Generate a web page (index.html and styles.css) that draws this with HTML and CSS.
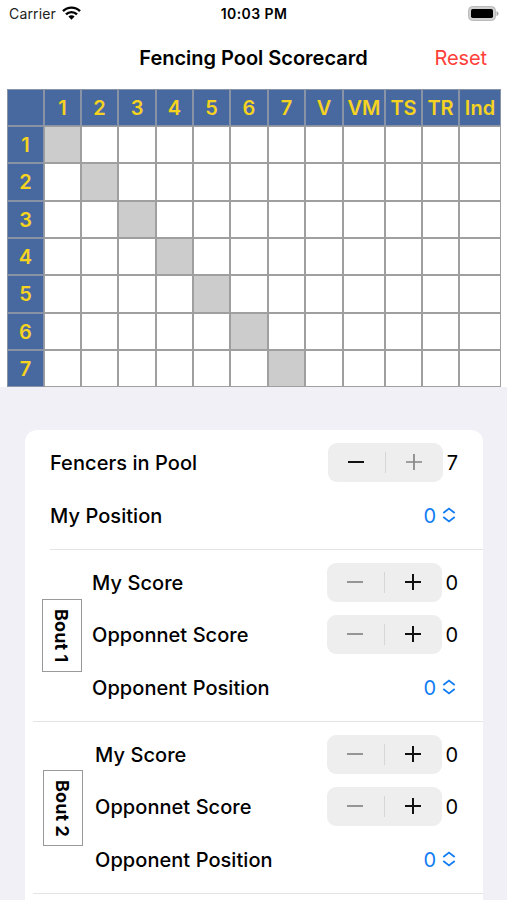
FILE: index.html
```html
<!DOCTYPE html>
<html lang="en">
<head>
<meta charset="utf-8">
<title>Fencing Pool Scorecard</title>
<link rel="stylesheet" href="styles.css">
</head>
<body>
<svg class="defs" width="0" height="0">
  <symbol id="minus" viewBox="0 0 18 18"><path d="M1 9H17"/></symbol>
  <symbol id="plus" viewBox="0 0 18 18"><path d="M1 9H17M9 1V17"/></symbol>
  <symbol id="updown" viewBox="0 0 14 16"><path d="M1.3 6L7 1.6L12.7 6M1.3 10L7 14.4L12.7 10"/></symbol>
</svg>
<header class="status">
  <div class="carrier"><span>Carrier</span>
    <svg class="wifi" width="19" height="14" viewBox="0 0 19 14"><path d="M1 5.2A11.8 11.8 0 0 1 18 5.2M4 8.4A7.7 7.7 0 0 1 15 8.4" fill="none" stroke="#000" stroke-width="2.4"/><path d="M6.4 10.6A4.4 4.4 0 0 1 12.6 10.6L9.5 13.8Z"/></svg>
  </div>
  <time class="clock">10:03 PM</time>
  <svg class="battery" width="31" height="15" viewBox="0 0 31 15"><rect x=".5" y=".5" width="27" height="14" rx="4" fill="#cfcfcf" stroke="#bbb"/><rect x="3" y="3" width="22" height="9" rx="1.8"/><path d="M28.5 5Q30.5 5.5 30.5 7.5T28.5 10Z" fill="#aaa"/></svg>
</header>
<nav class="navbar"><h1>Fencing Pool Scorecard</h1><button class="reset">Reset</button></nav>
<main>
  <section class="board"><div class="pool" id="pool"></div></section>
  <section class="card">
    <div class="settings">
      <div class="row"><span class="label">Fencers in Pool</span><div class="stepper"><svg><use href="#minus"/></svg><i></i><svg class="off"><use href="#plus"/></svg></div><span class="value narrow">7</span></div>
      <div class="row choice"><span class="label">My Position</span><span class="picker">0<svg><use href="#updown"/></svg></span></div>
    </div>
    <div class="bout first">
      <div class="tag"><span>Bout 1</span></div>
      <div class="rows">
        <div class="row"><span class="label">My Score</span><div class="stepper"><svg class="off"><use href="#minus"/></svg><i></i><svg><use href="#plus"/></svg></div><span class="value">0</span></div>
        <div class="row"><span class="label">Opponnet Score</span><div class="stepper"><svg class="off"><use href="#minus"/></svg><i></i><svg><use href="#plus"/></svg></div><span class="value">0</span></div>
        <div class="row choice"><span class="label">Opponent Position</span><span class="picker">0<svg><use href="#updown"/></svg></span></div>
      </div>
    </div>
    <div class="bout second">
      <div class="tag"><span>Bout 2</span></div>
      <div class="rows">
        <div class="row"><span class="label">My Score</span><div class="stepper"><svg class="off"><use href="#minus"/></svg><i></i><svg><use href="#plus"/></svg></div><span class="value">0</span></div>
        <div class="row"><span class="label">Opponnet Score</span><div class="stepper"><svg class="off"><use href="#minus"/></svg><i></i><svg><use href="#plus"/></svg></div><span class="value">0</span></div>
        <div class="row choice"><span class="label">Opponent Position</span><span class="picker">0<svg><use href="#updown"/></svg></span></div>
      </div>
    </div>
    <div class="next"></div>
  </section>
</main>
<script src="pool.js"></script>
</body>
</html>
```
FILE: styles.css
```css
* { box-sizing: border-box; }
body { margin: 0; height: 900px; overflow: hidden; background: #fff; color: #000; font-family: Inter, "Liberation Sans", sans-serif; }
.defs { display: block; }
.status { height: 28px; padding: 0 8px 0 9px; display: grid; grid-template-columns: 1fr auto 1fr; align-items: center; font-size: 14px; }
.carrier { display: flex; align-items: center; gap: 6px; color: #222; letter-spacing: .15px; margin-top: -1px; }
.wifi { margin-top: -2px; }
.clock { font-weight: 600; font-size: 14px; letter-spacing: .4px; margin-top: -1px; }
.battery { justify-self: end; margin-top: -2px; }
.navbar { height: 60px; display: grid; grid-template-columns: 1fr auto 1fr; align-items: center; padding: 0 20px; }
h1 { grid-column: 2; margin: 0; font-size: 20px; font-weight: 600; letter-spacing: -.02px; white-space: nowrap; }
.reset { justify-self: end; border: 0; padding: 0; background: none; color: #ff4038; font: 400 20px Inter, sans-serif; letter-spacing: -.1px; }
main { height: 812px; background: #f1f0f6; }
.board { background: #fff; height: 299px; padding: 1px 6px 0 7px; }
.pool { display: grid; grid-template-columns: 37px 37px 37px 38px 37px 37px 38px 37px 38px 42px 37px 37px 42px; grid-template-rows: 37px 37px 38px 37px 37px 38px 37px 37px; }
.cell { border: 1px solid #9f9f9f; background: #fff; display: flex; align-items: center; justify-content: center; color: #f6d321; font-size: 20px; font-weight: 600; }
.cell.head { background: #48699f; border-color: #8993a6; }
.cell.self { background: #ccc; }
.card { margin: 43px 24px 0 25px; height: 470px; background: #fff; border-radius: 12px 12px 0 0; }
.settings { height: 119px; padding: 7px 0 0 25px; }
.row { height: 52px; display: flex; align-items: center; padding-right: 25px; }
.row.choice { padding: 1px 26px 0 0; }
.label { font-size: 20px; font-weight: 550; margin-right: auto; white-space: nowrap; letter-spacing: .06px; }
.stepper { width: 115px; height: 39px; margin-bottom: 2px; border-radius: 9px; background: #eee; display: flex; align-items: center; justify-content: space-between; padding: 0 20px 0 19px; }
.stepper svg { width: 18px; height: 18px; fill: none; stroke: #111; stroke-width: 2; }
.stepper svg.off { stroke: #858585; stroke-width: 1.7; }
.stepper i { width: 1px; height: 21px; background: #d6d6d6; }
.value { width: 16px; text-align: right; font-size: 20px; }
.value.narrow { width: 15px; }
.picker { display: flex; align-items: center; gap: 6px; color: #117cf3; font-size: 20px; }
.picker svg { width: 14px; height: 16px; fill: none; stroke: #117cf3; stroke-width: 1.8; margin: 0 1px 1px 0; }
.bout { margin-left: 8px; height: 172px; border-top: 1px solid #e4e4e7; display: grid; grid-template-columns: 59px 1fr; }
.bout.first { margin-left: 0; padding-left: 8px; border: 0; background: linear-gradient(#e4e4e7, #e4e4e7) 25px 0 / 433px 1px no-repeat; }
.bout.first .rows { padding-top: 8px; }
.bout.second { grid-template-columns: 62px 1fr; }
.rows { padding-top: 7px; }
.tag { width: 40px; height: 73px; margin: 50px 0 0 9px; border: 1px solid #999; display: flex; align-items: center; justify-content: center; }
.second .tag { height: 76px; margin: 48px 0 0 10px; }
.tag span { writing-mode: vertical-rl; font-size: 18px; font-weight: 650; white-space: nowrap; letter-spacing: .1px; margin-right: 2px; }
.next { margin-left: 8px; border-top: 1px solid #e4e4e7; }
```
FILE: pool.js
```js
const pool = document.getElementById('pool');
const heads = ['', '1', '2', '3', '4', '5', '6', '7', 'V', 'VM', 'TS', 'TR', 'Ind'];
for (let r = 0; r <= 7; r++) {
  heads.forEach((text, c) => {
    const cell = document.createElement('div');
    cell.className = 'cell';
    if (r === 0 || c === 0) {
      cell.classList.add('head');
      cell.textContent = r === 0 ? text : r;
    } else if (r === c) {
      cell.classList.add('self');
    }
    pool.appendChild(cell);
  });
}
```
